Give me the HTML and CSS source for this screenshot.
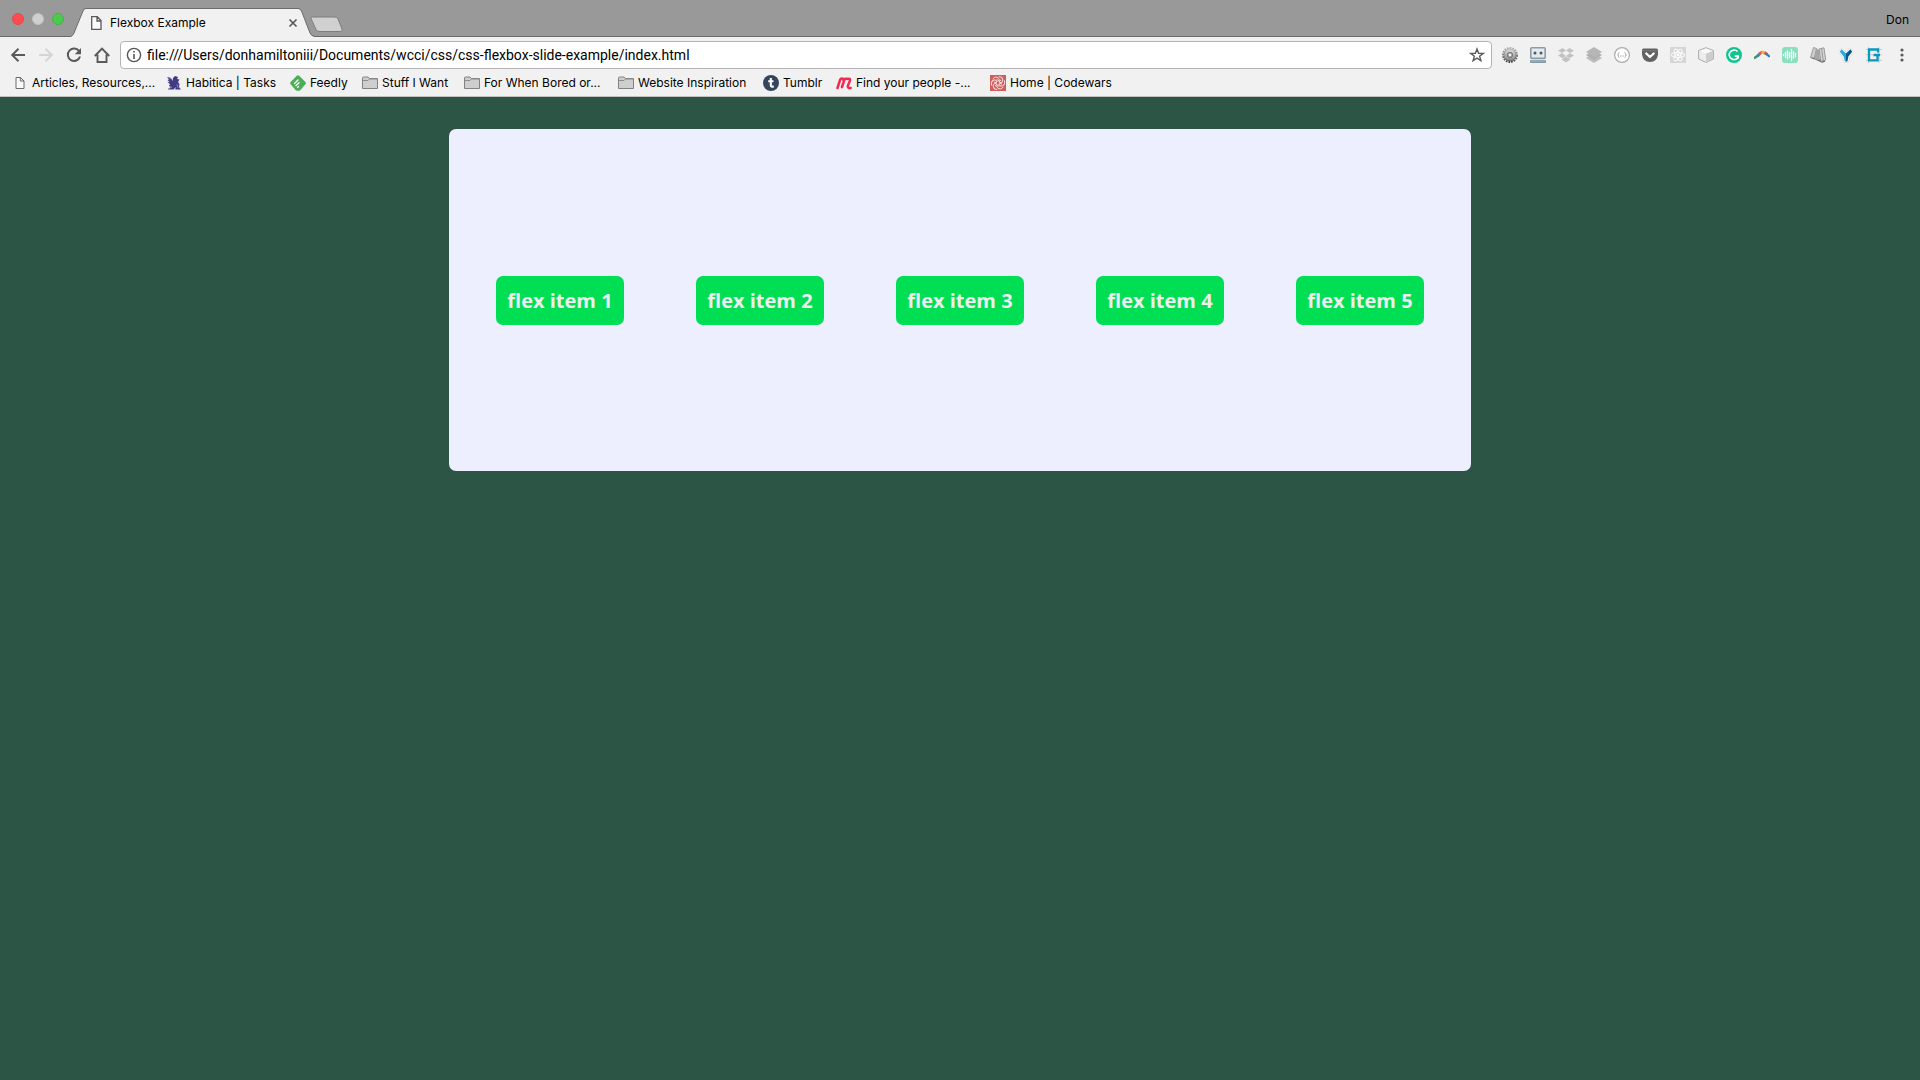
FILE: index.html
```html
<!DOCTYPE html>
<html lang="en">
<head>
<meta charset="utf-8">
<title>Flexbox Example</title>
<link rel="stylesheet" href="styles.css">
</head>
<body>
<header class="browser">
  <div class="titlebar">
    <div class="lights">
      <button class="light light-close" aria-label="Close window"></button>
      <button class="light light-min" aria-label="Minimize window"></button>
      <button class="light light-max" aria-label="Zoom window"></button>
    </div>
    <div class="tab">
      <svg class="tab-shape" viewBox="0 0 244 29" aria-hidden="true"><path d="M0 28.500C1.500 28 2 27 3 25L12 3Q13 .5 15 .5H227Q229.500 .5 230.500 3L239 25Q240.500 28.500 243 28.500V29H0z" fill="#f1f1f1"/><path d="M0 28C1.500 28 2 27 3 25L12 3Q13 .5 15 .5H227Q229.500 .5 230.500 3L239 25Q240.500 28 243 28" fill="none" stroke="#6c6a6c"/></svg>
      <svg class="icon" viewBox="0 0 16 16" aria-hidden="true"><path d="M3.700 1.700H9.300L13 5.500V14.300H3.700zM9 2V6H13" fill="#fafafa" stroke="#5a5a5a" stroke-width="1.300"/></svg>
      <span class="tab-title">Flexbox Example</span>
      <button class="tool" aria-label="Close tab"><svg class="icon" viewBox="0 0 16 16"><path d="M4.500 4.500L11.500 11.500M11.500 4.500L4.500 11.500" stroke="#5a5a5a" stroke-width="1.700"/></svg></button>
    </div>
    <button class="new-tab" aria-label="New tab"><svg width="34" height="18" viewBox="0 0 34 18"><path d="M2.500 1H24.500Q27 1 28 3L32 13Q32.800 15.500 30.500 15.500H9Q7 15.500 6 13.500L1 2.500Q.5 1 2.500 1z" fill="#d0d0d0" stroke="#7d7d7d"/></svg></button>
    <button class="profile">Don</button>
  </div>

  <div class="toolbar">
    <nav class="nav" aria-label="Navigation">
      <button class="tool" aria-label="Back"><svg class="icon" viewBox="0 0 16 16"><path d="M15 8H2.500M8.500 1.700L2.200 8L8.500 14.300" fill="none" stroke="#5a5a5a" stroke-width="2"/></svg></button>
      <button class="tool" aria-label="Forward"><svg class="icon" viewBox="0 0 16 16"><path d="M1 8H13.500M7.500 1.700L13.800 8L7.500 14.300" fill="none" stroke="#d5d5d5" stroke-width="2"/></svg></button>
      <button class="tool" aria-label="Reload"><svg class="icon" viewBox="0 0 16 16"><path d="M13.300 4.400A6.200 6.200 0 1 0 14 9.500" fill="none" stroke="#5a5a5a" stroke-width="2"/><path d="M15 1V7.200H8.800z" fill="#5a5a5a"/></svg></button>
      <button class="tool" aria-label="Home"><svg class="icon" viewBox="0 0 16 16"><path d="M.8 9L8 1.500L15.200 9M3.500 7.500V15H12.500V7.500" fill="none" stroke="#5a5a5a" stroke-width="1.900"/></svg></button>
    </nav>
    <div class="omnibox">
      <svg class="icon" viewBox="0 0 16 16" aria-hidden="true"><circle cx="8" cy="8" r="6.600" fill="none" stroke="#555" stroke-width="1.400"/><path d="M8 7V12M8 4V5.600" stroke="#555" stroke-width="1.600"/></svg>
      <input class="url" type="text" aria-label="Address" value="file:///Users/donhamiltoniii/Documents/wcci/css/css-flexbox-slide-example/index.html">
      <button class="tool" aria-label="Bookmark this page"><svg class="icon" viewBox="0 0 16 16"><path d="M8 2L9.600 6.200L14.200 6.400L10.600 9.200L11.900 13.600L8 11.100L4.100 13.600L5.400 9.200L1.800 6.400L6.400 6.200z" fill="none" stroke="#5a5a5a" stroke-width="1.400"/></svg></button>
    </div>
    <div class="extensions">
      <button class="tool" aria-label="Settings gear"><svg class="icon" viewBox="0 0 16 16"><defs><linearGradient id="gear" x2="0" y2="1"><stop stop-color="#b0b0b0"/><stop offset="1" stop-color="#444"/></linearGradient><linearGradient id="disc" x2="0" y2="1"><stop stop-color="#ddd"/><stop offset="1" stop-color="#888"/></linearGradient></defs><circle cx="8" cy="8" r="7" fill="none" stroke="url(#gear)" stroke-width="2" stroke-dasharray="1.700 1"/><circle cx="8" cy="8" r="6" fill="url(#disc)" stroke="url(#gear)" stroke-width=".8"/><circle cx="8" cy="8" r="2.600" fill="#aaa" stroke="#777" stroke-width="1"/><circle cx="8" cy="8" r="1.200" fill="#f5f5f5"/></svg></button>
      <button class="tool" aria-label="Robot"><svg class="icon" viewBox="0 0 16 16"><rect x=".8" y=".8" width="14.400" height="10.600" rx="1" fill="#e4eaee" stroke="#8a9ca7" stroke-width="1.600"/><circle cx="5" cy="6" r="1.500" fill="#4d5960"/><circle cx="11" cy="6" r="1.500" fill="#4d5960"/><rect y="13" width="16" height="3" rx="1" fill="#8297a3"/><path d="M1 14H15" stroke="#b8cad4" stroke-width=".8"/></svg></button>
      <button class="tool" aria-label="Dropbox"><svg class="icon" viewBox="0 0 16 16"><path d="M4.500 1L8 3.500L4 6L0 3.700zM11.500 1L16 3.700L12 6L8 3.500zM0 8.500L4 6L8 9L4.500 11.200zM16 8.500L12 6L8 9L11.500 11.200zM4 12L8 9.800L12 12V12.800L8 15.500L4 12.800z" fill="#c2c2c2"/></svg></button>
      <button class="tool" aria-label="Buffer"><svg class="icon" viewBox="0 0 16 16"><path d="M8 6L16 11L8 16L0 11z" fill="#bcbcbc"/><path d="M8 3.500L16 8L8 13L0 8z" fill="#b0b0b0"/><path d="M8 0L16 5L8 10L0 5z" fill="#b6b6b6"/></svg></button>
      <button class="tool" aria-label="JSON viewer"><svg class="icon" viewBox="0 0 16 16"><circle cx="8" cy="8" r="7.400" fill="#fff" stroke="#aaa" stroke-width="1.200"/><path d="M5.500 5.500Q4.500 5.500 4.500 6.500Q4.700 8 3.500 8Q4.700 8 4.500 9.500Q4.500 10.500 5.500 10.500M10.500 5.500Q11.500 5.500 11.500 6.500Q11.300 8 12.500 8Q11.300 8 11.500 9.500Q11.500 10.500 10.500 10.500" fill="none" stroke="#999" stroke-width=".8"/><path d="M6.300 9H9.700" stroke="#999" stroke-width="1" stroke-dasharray=".8 .5"/></svg></button>
      <button class="tool" aria-label="Pocket"><svg class="icon" viewBox="0 0 16 16"><path d="M1.500 1.500H14.500Q16 1.500 16 3V7.500Q15 15 8 15Q1 15 0 7.500V3Q0 1.500 1.500 1.500z" fill="#626262"/><path d="M0 3.700H16" stroke="#777"/><path d="M4.300 6.500L8 10L11.700 6.500" fill="none" stroke="#fff" stroke-width="2.300" stroke-linecap="round" stroke-linejoin="round"/></svg></button>
      <button class="tool" aria-label="React tools"><svg class="icon" viewBox="0 0 16 16"><path d="M0 0H16V16H0z" fill="#d6d6d6"/><g fill="none" stroke="#fafafa" stroke-width="1.100"><ellipse cx="8" cy="8" rx="6.500" ry="2.500"/><ellipse cx="8" cy="8" rx="6.500" ry="2.500" transform="rotate(60 8 8)"/><ellipse cx="8" cy="8" rx="6.500" ry="2.500" transform="rotate(120 8 8)"/></g><circle cx="8" cy="8" r="1.400" fill="#fff"/></svg></button>
      <button class="tool" aria-label="Cube"><svg class="icon" viewBox="0 0 16 16"><path d="M8 .7L15.400 3.500V12L8 15.400L.6 12V3.500z" fill="#ededed" stroke="#aaa"/><path d="M8 6.800L14.800 4V11.700L8 14.800z" fill="#ccc"/><path d="M8 1.500L14 3.800L8 6.500L2 3.800z" fill="#f8f8f8"/></svg></button>
      <button class="tool" aria-label="Grammarly"><svg class="icon" viewBox="0 0 16 16"><circle cx="8" cy="8" r="8" fill="#0fc58c"/><path d="M11.500 4.500A4.800 4.800 0 1 0 12.600 9.300" fill="none" stroke="#fff" stroke-width="1.700"/><path d="M8.700 8.300H13V12.500L11.500 10H8.700z" fill="#fff"/></svg></button>
      <button class="tool" aria-label="Boomerang"><svg class="icon" viewBox="0 0 16 16"><path d="M.8 10.800L4 8.600" stroke="#3f9b60" stroke-width="2.600" stroke-linecap="round"/><path d="M3.500 9L6 6.500" stroke="#3788b5" stroke-width="2.600"/><path d="M5 7L8.500 5" stroke="#e95c43" stroke-width="3"/><path d="M7.500 5L11.500 6.200" stroke="#efb449" stroke-width="3"/><path d="M10.500 5.500L13.300 7.500" stroke="#e05a55" stroke-width="2.800"/><path d="M12.500 7L15 9.200" stroke="#3482b5" stroke-width="2.300" stroke-linecap="round"/></svg></button>
      <button class="tool" aria-label="Sound wave"><svg class="icon" viewBox="0 0 16 16"><rect width="16" height="16" rx="3" fill="#89e0bd"/><path d="M1.500 7.500V8.500M3.500 5.500V10.500M5.500 4V12M7.500 5.500V10.500M9.500 2.500V13.500M11.500 5V11M13.500 6.500V9.500" stroke="#fff" stroke-width="1.300" stroke-linecap="round"/></svg></button>
      <button class="tool" aria-label="Library"><svg class="icon" viewBox="0 0 16 16"><path d="M3.500 .5L6.500 1.500L4 12L.5 10.500z" fill="#d0d0d0" stroke="#888" stroke-width=".8"/><path d="M.3 10.500L4 12L12 15.700L15 14.800V13.500L6 11z" fill="#666"/><path d="M6.500 1.500L9 3L10 13.500L4.500 12z" fill="#a5a5a5"/><path d="M9 2L14 .8L15.700 13L11 14.800z" fill="#d5d5d5" stroke="#888" stroke-width=".8"/><path d="M11.500 1.500L13.300 14" stroke="#888" stroke-width=".8"/></svg></button>
      <button class="tool" aria-label="Vysor"><svg class="icon" viewBox="0 0 16 16"><path d="M3.500 1L8 5L12.500 1L15.700 4.500L12 10L10.500 15.500H6L4.500 10L.3 4.500z" fill="#fff" stroke="#dedede"/><path d="M3.500 2.300L8 6.500V14.500H6.800L5.700 9.500L1.800 4.800z" fill="#29a7e0"/><path d="M12.500 2.300L8 6.500V14.500H9.400L10.400 9.500L14.200 4.800z" fill="#075a8a"/></svg></button>
      <button class="tool" aria-label="Grid"><svg class="icon" viewBox="0 0 16 16"><path d="M0 2.500H16M0 7.800H16M0 13.300H16M2.500 0V16M13 0V16" stroke="#c6c8c9"/><path d="M12 5.500V2.500H3V13.300H11.500V8H7.500M12 8H14" fill="none" stroke="#079abd" stroke-width="2.300"/></svg></button>
      <button class="tool" aria-label="Menu"><svg class="icon" viewBox="0 0 16 16"><g fill="#5a5a5a"><circle cx="8" cy="3" r="1.600"/><circle cx="8" cy="8" r="1.600"/><circle cx="8" cy="13" r="1.600"/></g></svg></button>
    </div>
  </div>

  <nav class="bookmarks" aria-label="Bookmarks">
    <a class="bookmark" href="#"><svg class="icon" viewBox="0 0 16 16"><path d="M4 2.500H8.500L12 6V13.500H4zM8.300 2.500V6H12" fill="#fafafa" stroke="#6a6a6a"/></svg><span>Articles, Resources,...</span></a>
    <a class="bookmark" href="#"><svg class="icon" viewBox="0 0 16 16"><path d="M1 2L5 3L6.500 6L7 3L9 1L12 2L11 4L13.500 4.500L12 7L13.500 9L13 12L15 14.500H9L10 12L7.500 14.500H2L5 12L3 11L4 9L1.500 7.500L3.500 7L1.500 5L3 4.500z" fill="#423a84"/><path d="M2 2L5 4M11 9L12 13M2 14L6 12" stroke="#8981bd"/></svg><span>Habitica | Tasks</span></a>
    <a class="bookmark" href="#"><svg class="icon" viewBox="0 0 16 16"><path d="M6.800 .8Q8 -.3 9.200 .8L15.400 7Q16.500 8.200 15.400 9.300L10.500 15Q10 15.700 9 15.700H7Q6 15.700 5.500 15L.6 9.300Q-.4 8.200 .6 7z" fill="#4caf58"/><path d="M4.500 8.500L8 5M6 10.500L9 7.800M7.700 12.300L8.500 11.500" stroke="#fff" stroke-width="1.400" stroke-linecap="round"/></svg><span>Feedly</span></a>
    <a class="bookmark" href="#"><svg class="icon" viewBox="0 0 16 16"><path d="M.5 13.500V3Q.5 2 1.500 2H6L7.500 3.500H15.500V13.500z" fill="#cecece" stroke="#828282"/><path d="M1 5.500H6L7.500 4H15" fill="none" stroke="#8c8c8c"/></svg><span>Stuff I Want</span></a>
    <a class="bookmark" href="#"><svg class="icon" viewBox="0 0 16 16"><path d="M.5 13.500V3Q.5 2 1.500 2H6L7.500 3.500H15.500V13.500z" fill="#cecece" stroke="#828282"/><path d="M1 5.500H6L7.500 4H15" fill="none" stroke="#8c8c8c"/></svg><span>For When Bored or...</span></a>
    <a class="bookmark" href="#"><svg class="icon" viewBox="0 0 16 16"><path d="M.5 13.500V3Q.5 2 1.500 2H6L7.500 3.500H15.500V13.500z" fill="#cecece" stroke="#828282"/><path d="M1 5.500H6L7.500 4H15" fill="none" stroke="#8c8c8c"/></svg><span>Website Inspiration</span></a>
    <a class="bookmark" href="#"><svg class="icon" viewBox="0 0 16 16"><circle cx="8" cy="8" r="8" fill="#34465c"/><path d="M7.800 3V10.500Q7.800 12 10.800 11.500M5.200 6.200H10.500" fill="none" stroke="#fff" stroke-width="2.100"/></svg><span>Tumblr</span></a>
    <a class="bookmark" href="#"><svg class="icon" viewBox="0 0 16 16"><path d="M1.500 13L4.200 4.500Q5 2.800 7.200 3.800M6 12L8.300 5Q9.300 3 11.300 4M7.200 3.800Q8 4.200 7.500 5.500M11.500 4Q14.500 2.800 14 5.500L11.800 11Q11.500 13.500 14.700 13" fill="none" stroke="#ed2c52" stroke-width="2.500" stroke-linecap="round"/></svg><span>Find your people -...</span></a>
    <a class="bookmark" href="#"><svg class="icon" viewBox="0 0 16 16"><path d="M0 0H16V16H0z" fill="#cf5f5c"/><g fill="none" stroke="#f5dddd" stroke-width="1"><path id="arm" d="M8 6.500Q10.500 4.500 8 2.500Q5 .8 2.700 4M8 6.500Q6.200 5.200 7.200 4"/><use href="#arm" transform="rotate(60 8 8)"/><use href="#arm" transform="rotate(120 8 8)"/><use href="#arm" transform="rotate(180 8 8)"/><use href="#arm" transform="rotate(240 8 8)"/><use href="#arm" transform="rotate(300 8 8)"/></g></svg><span>Home | Codewars</span></a>
  </nav>
</header>

<main class="page">
  <section class="flex-container">
    <div class="flex-item">flex item 1</div>
    <div class="flex-item">flex item 2</div>
    <div class="flex-item">flex item 3</div>
    <div class="flex-item">flex item 4</div>
    <div class="flex-item">flex item 5</div>
  </section>
</main>
</body>
</html>
```
FILE: styles.css
```css
* {
  box-sizing: border-box;
}

body {
  margin: 0;
  min-height: 100vh;
  background: #2c5545;
  color: #000;
  font: 12px/16px Inter, "Liberation Sans", sans-serif;
}

button {
  padding: 0;
  border: 0;
  background: none;
  color: inherit;
  font: inherit;
}

.icon {
  display: block;
  flex: none;
  width: 16px;
  height: 16px;
}

.browser {
  background: #f1f1f1;
  border-bottom: 1px solid #c2c2c2;
}

/* Title bar */
.titlebar {
  display: flex;
  height: 37px;
  background: #999;
  border-bottom: 1px solid #6c6a6c;
}

.lights {
  display: flex;
  align-items: center;
  gap: 8px;
  padding: 2px 0 0 12px;
}

.light {
  width: 12px;
  height: 12px;
  border: 1px solid;
  border-radius: 50%;
}

.light-close {
  background: #fd4c51;
  border-color: #e8474a;
}

.light-min {
  background: #d0d0d0;
  border-color: #c0c0c0;
}

.light-max {
  background: #4cc94e;
  border-color: #43b446;
}

.tab {
  position: relative;
  display: flex;
  align-items: center;
  gap: 6px;
  width: 244px;
  height: 29px;
  margin: 8px 0 0 7px;
  padding: 0 14px 0 17px;
}

.tab-shape {
  position: absolute;
  inset: 0;
  width: 244px;
  height: 29px;
}

.tab > .icon,
.tab > .tab-title,
.tab > .tool {
  position: relative;
}

.tab-title {
  flex: 1;
}

.new-tab {
  align-self: flex-start;
  height: 18px;
  margin: 16px 0 0 -5px;
}

.profile {
  margin-left: auto;
  padding: 4px 11px 0 0;
}

/* Toolbar */
.toolbar {
  display: flex;
  align-items: center;
  gap: 10px;
  height: 36px;
  padding: 0 10px;
}

.nav,
.extensions {
  display: flex;
  gap: 12px;
}

.omnibox {
  display: flex;
  flex: 1;
  align-items: center;
  gap: 5px;
  height: 28px;
  padding: 0 6px 0 5px;
  background: #fff;
  border: 1px solid #b4b2b4;
  border-radius: 4px;
}

.url {
  flex: 1;
  min-width: 0;
  padding: 0;
  border: 0;
  outline: 0;
  background: none;
  color: #000;
  font: 14px/20px Roboto, "Liberation Sans", sans-serif;
}

/* Bookmarks */
.bookmarks {
  display: grid;
  grid-template-columns: 154px 124px 72px 102px 154px 145px 73px 154px 154px;
  height: 23px;
  padding: 2px 12px 0;
}

.bookmark {
  display: flex;
  gap: 4px;
  height: 16px;
  color: inherit;
  text-decoration: none;
  white-space: nowrap;
}

/* Page */
.page {
  padding: 32px 16px;
}

.flex-container {
  display: flex;
  flex-wrap: wrap;
  align-items: center;
  justify-content: space-around;
  max-width: 1022px;
  min-height: 342px;
  margin: 0 auto;
  padding: 11px;
  background: #edeefe;
  border-radius: 7px;
}

.flex-item {
  padding: 11px;
  background: #00de54;
  border-radius: 7px;
  color: #eee;
  font: 700 20px/27px "Open Sans", sans-serif;
}
```
